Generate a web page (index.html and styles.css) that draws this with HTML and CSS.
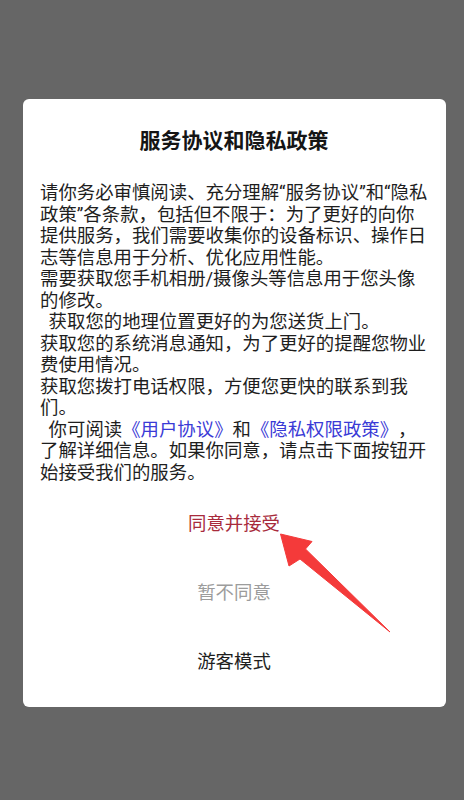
FILE: index.html
```html
<!DOCTYPE html>
<html lang="zh-CN">
<head>
<meta charset="utf-8">
<title>服务协议和隐私政策</title>
<link rel="stylesheet" href="styles.css">
</head>
<body>
<div class="overlay">
  <div class="dialog">
    <h1 class="dialog-title">服务协议和隐私政策</h1>
    <div class="dialog-body">
      <p class="para">请你务必审慎阅读、充分理解“服务协议”和“隐私政策”各条款，包括但不限于：为了更好的向你提供服务，我们需要收集你的设备标识、操作日志等信息用于分析、优化应用性能。</p>
      <p class="para">需要获取您手机相册/摄像头等信息用于您头像的修改。</p>
      <p class="para indent">获取您的地理位置更好的为您送货上门。</p>
      <p class="para">获取您的系统消息通知，为了更好的提醒您物业费使用情况。</p>
      <p class="para">获取您拨打电话权限，方便您更快的联系到我们。</p>
      <p class="para indent">你可阅读<a class="link">《用户协议》</a>和<a class="link">《隐私权限政策》</a>，了解详细信息。如果你同意，请点击下面按钮开始接受我们的服务。</p>
    </div>
    <div class="actions">
      <button class="action action-accept">同意并接受</button>
      <button class="action action-decline">暂不同意</button>
      <button class="action action-guest">游客模式</button>
    </div>
    <svg class="pointer" width="116" height="104" viewBox="0 0 116 104" aria-hidden="true">
      <polygon points="2.5,2 34,9.5 27.5,17 112,100 22,27 11,34" fill="#f43a3a" stroke="#f43a3a" stroke-width="1" stroke-linejoin="round"/>
    </svg>
  </div>
</div>
</body>
</html>
```

FILE: styles.css
```css
html, body {
  margin: 0;
  padding: 0;
}

body {
  background: #666666;
  font-family: Roboto, "Noto Sans CJK SC", sans-serif;
  color: #1e1e1e;
  text-spacing-trim: space-all;
}

.overlay {
  width: 464px;
  height: 800px;
  padding-top: 99px;
  box-sizing: border-box;
}

.dialog {
  position: relative;
  margin-left: 23px;
  width: 423px;
  box-sizing: border-box;
  background: #ffffff;
  border-radius: 6px;
  padding: 31px 18px 10px 17px;
  display: flex;
  flex-direction: column;
}

.dialog-title {
  margin: 0;
  font-size: 21px;
  line-height: 22px;
  font-weight: 700;
  text-align: center;
  color: #151515;
}

.dialog-body {
  margin-top: 30px;
  font-size: 18.4px;
  line-height: 21.5px;
  color: #1e1e1e;
}

.para {
  margin: 0;
}

.indent {
  text-indent: 8.6px;
}

.link {
  color: #3a3ad6;
  text-decoration: none;
}

.actions {
  margin-top: 6.5px;
  display: flex;
  flex-direction: column;
}

.action {
  height: 69px;
  padding: 0;
  border: none;
  background: none;
  font-family: inherit;
  font-size: 18.4px;
  line-height: 22px;
  text-align: center;
  text-spacing-trim: space-all;
}

.action-accept {
  color: #a82b3c;
}

.action-decline {
  color: #9c9c9c;
}

.action-guest {
  color: #1e1e1e;
}

.pointer {
  position: absolute;
  left: 255px;
  top: 433px;
}
```
